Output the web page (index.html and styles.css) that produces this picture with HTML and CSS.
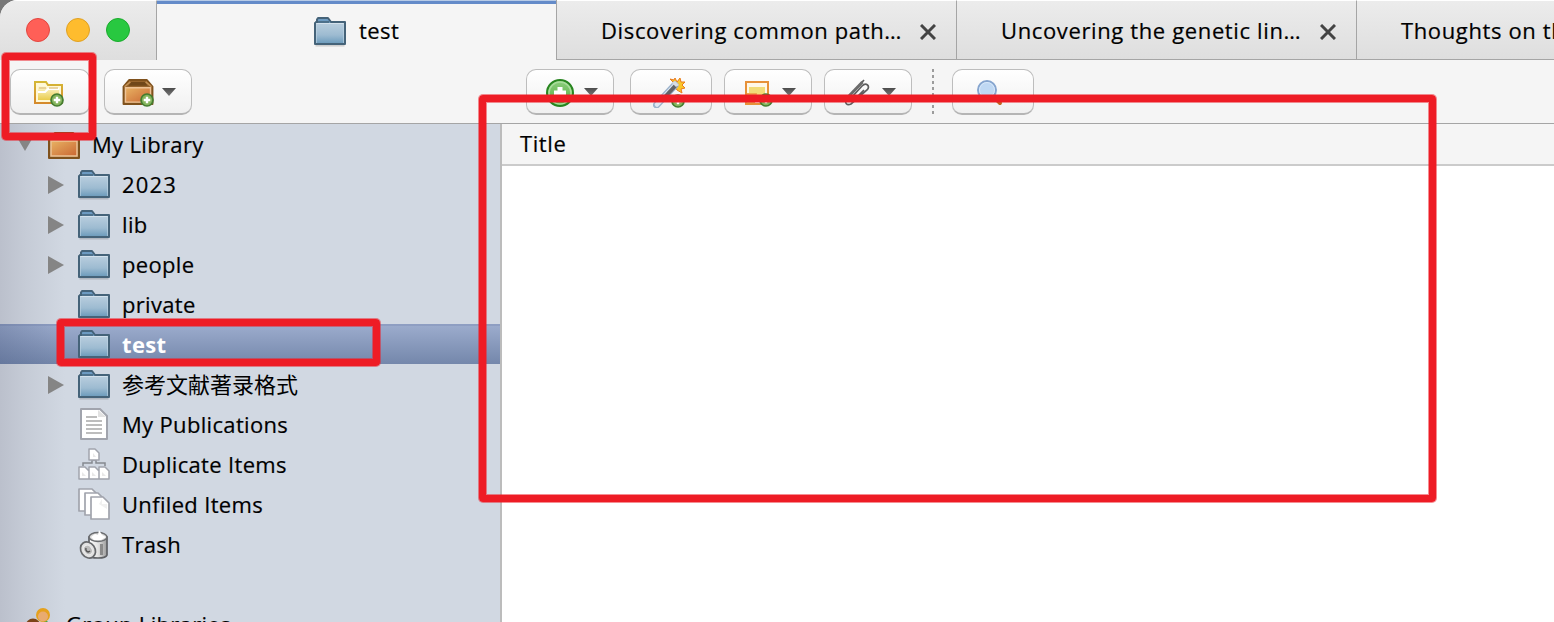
FILE: index.html
```html
<!DOCTYPE html>
<html lang="en">
<head>
<meta charset="utf-8">
<title>test</title>
<link rel="stylesheet" href="styles.css">
</head>
<body>
<svg class="defs" aria-hidden="true">
  <defs>
    <linearGradient id="blue" x1="0" y1="0" x2="0" y2="1"><stop offset="0" stop-color="#b9cede"/><stop offset=".6" stop-color="#9dbbd1"/><stop offset="1" stop-color="#6f9dbd"/></linearGradient>
    <linearGradient id="orange" x1="0" y1="0" x2="1" y2="1"><stop offset="0" stop-color="#e8b263"/><stop offset="1" stop-color="#ca6733"/></linearGradient>
    <linearGradient id="yellow" x1="0" y1="0" x2="0" y2="1"><stop offset="0" stop-color="#fffbe0"/><stop offset="1" stop-color="#e9cc4b"/></linearGradient>
    <linearGradient id="gold" x1="0" y1="0" x2="0" y2="1"><stop offset="0" stop-color="#d5b735"/><stop offset="1" stop-color="#d58a2c"/></linearGradient>
    <linearGradient id="metal"><stop offset="0" stop-color="#fff"/><stop offset=".5" stop-color="#e3e3e3"/><stop offset="1" stop-color="#9a9a9a"/></linearGradient>
    <linearGradient id="green" x1="0" y1="0" x2="0" y2="1"><stop offset="0" stop-color="#8fce7f"/><stop offset="1" stop-color="#4fae3e"/></linearGradient>
    <linearGradient id="arrow" x1="0" y1="0" x2="0" y2="1"><stop offset="0" stop-color="#4c4c4c"/><stop offset="1" stop-color="#777"/></linearGradient>
  </defs>
  <symbol id="folder" viewBox="0 0 32 30">
    <path d="M1.5 28.6h29" stroke="#000" stroke-opacity=".15" stroke-width="2"/>
    <path d="M3 6V2.500L4 1h10l3 4h14v22H1V6z" fill="#6d9bc2" stroke="#456379" stroke-width="2" stroke-linejoin="round"/>
    <path d="M2 6h28v20H2z" fill="url(#blue)"/>
    <path d="M2 6.500h28" stroke="#d3e1ec"/><path d="M2.500 6v20M29.500 6v20" stroke="#c0d6e4" stroke-opacity=".6"/>
    <path d="M1 5h14" stroke="#456379" stroke-width="1.500"/>
  </symbol>
  <symbol id="plus" viewBox="0 0 14 14">
    <circle cx="7" cy="7" r="6" fill="#85b55d" stroke="#447c30" stroke-width="1.700"/>
    <path d="M7 3.700v6.600M3.700 7h6.600" stroke="#fff" stroke-width="2.400"/>
  </symbol>
  <symbol id="caret" viewBox="0 0 14 8"><path d="M0 0h14L7 8z" fill="url(#arrow)"/></symbol>
  <symbol id="right" viewBox="0 0 16 18"><path d="M0 0l16 9L0 18z" fill="#858585"/></symbol>
  <symbol id="close" viewBox="0 0 16 16"><path d="M1 1l14 14M15 1L1 15" stroke="#444" stroke-width="3"/></symbol>
  <symbol id="box" viewBox="0 0 32 28">
    <path d="M1 8L7 1h18l6 7v18H1z" fill="#95632c" stroke="#7f511c" stroke-width="2" stroke-linejoin="round"/>
    <path d="M6 7l3-4h14l3 4z" fill="#704719"/><path d="M2 8l6-5M30 8l-6-5" stroke="#c39155" stroke-width="1.500"/>
    <path d="M3 9h26v15H3z" fill="url(#orange)" stroke="#edc397" stroke-width="1.500"/>
  </symbol>
  <symbol id="page" viewBox="0 0 28 32">
    <path d="M1 1h19l7 7v23H1z" fill="#fff" stroke="#a1a4ad" stroke-width="2" stroke-linejoin="round"/>
    <path d="M18 2v7h8" fill="#e2e2e2"/>
    <path d="M6 9h11M6 13h16M6 17h16M6 21h16M6 25h16" stroke="#bdbdbd" stroke-width="2"/>
  </symbol>
  <symbol id="duplicates" viewBox="0 0 32 32">
    <path d="M5 18v-3h9v-3h4v3h9v3" fill="none" stroke="#858990" stroke-width="1.500"/>
    <g fill="#fff" stroke="#a1a4ad" stroke-width="1.500" stroke-linejoin="round">
      <path d="M11 1h6l4 4v7H11zM1 19h6l4 4v8H1zM11 19h6l4 4v8H11zM21 19h6l4 4v8H21z"/>
    </g>
    <path d="M15 5v4h3zM4 24v4h4zM14 24v4h4zM24 24v4h4z" fill="#e8e8e8"/>
  </symbol>
  <symbol id="unfiled" viewBox="0 0 32 32">
    <g fill="#fff" stroke="#a1a4ad" stroke-width="1.700" stroke-linejoin="round">
      <path d="M1 1h13l6 6v16H1z"/><path d="M7 5h13l6 6v16H7z"/><path d="M13 9h12l6 6v16H13z"/>
    </g>
    <path d="M24 11v5h5v5l-8-5z" fill="#f0f0f0"/>
  </symbol>
  <symbol id="trash" viewBox="0 0 30 30">
    <path d="M10 7v18c1 4 17 4 18 0V7z" fill="url(#metal)" stroke="#5e6064" stroke-width="1.700"/>
    <ellipse cx="19" cy="7" rx="9" ry="4.500" fill="#d8d8d8" stroke="#6b6d70" stroke-width="1.500"/>
    <path d="M12 7l4-3 3 1 1-5 3 5 4 2-5 3h-7z" fill="#fff"/>
    <path d="M22.500 14v11" stroke="#8a8a8a" stroke-width="3"/>
    <ellipse cx="9" cy="20" rx="7" ry="8.500" transform="rotate(-35 9 20)" fill="#e2e2e2" stroke="#66686b" stroke-width="1.700"/>
    <ellipse cx="9" cy="20" rx="4" ry="5" transform="rotate(-35 9 20)" fill="#bbb" stroke="#eee"/>
    <path d="M7 18c-1 3 2 5 4 3" fill="none" stroke="#555" stroke-width="1.500"/>
  </symbol>
  <symbol id="people" viewBox="0 0 32 32">
    <path d="M12 21v-5l10-4 6 6v8z" fill="#45a54a"/>
    <circle cx="19" cy="7" r="7" fill="#e5a11d"/><ellipse cx="19" cy="8.500" rx="5" ry="5" fill="#e9ab70"/>
    <circle cx="9" cy="18" r="7.500" fill="#7c4317"/><circle cx="9" cy="20" r="4.500" fill="#d69055"/>
  </symbol>
</svg>

<div class="window">
  <header class="tabbar">
    <div class="lights"><i class="light red"></i><i class="light amber"></i><i class="light green"></i></div>
    <div class="tab active"><svg class="folder"><use href="#folder"/></svg><span>test</span></div>
    <div class="tab"><span>Discovering common path…</span><svg class="close"><use href="#close"/></svg></div>
    <div class="tab"><span>Uncovering the genetic lin…</span><svg class="close"><use href="#close"/></svg></div>
    <div class="tab"><span>Thoughts on th</span></div>
  </header>

  <div class="toolbar">
    <div class="tools-left">
      <div class="btn b80">
        <svg width="32" height="28" viewBox="0 0 32 28"><path d="M1 2h11l2 3h14v18H1z" fill="#fff8d6" stroke="url(#gold)" stroke-width="2"/><path d="M4 5h7l2 3h12v12H4z" fill="url(#yellow)"/><path d="M4 12h7l3-3h11" fill="none" stroke="#fff" stroke-width="2"/><path d="M5 8h7M15 8h9" stroke="#e4c88a" stroke-width="1.500"/><use href="#plus" x="16" y="13" width="14" height="14"/></svg>
      </div>
      <div class="btn b88">
        <svg width="32" height="28" viewBox="0 0 32 28"><use href="#box" width="32" height="27"/><use href="#plus" x="18" y="14" width="14" height="14"/></svg>
        <svg class="caret"><use href="#caret"/></svg>
      </div>
    </div>
    <div class="tools-right">
      <div class="btn b88">
        <svg width="32" height="28" viewBox="0 0 32 28"><circle cx="16" cy="14" r="13" fill="url(#green)" stroke="#27851f" stroke-width="2"/><circle cx="16" cy="14" r="11" fill="none" stroke="#a9dd9c" stroke-width="1.500"/><path d="M16 8v12M10 14h12" stroke="#fff" stroke-width="5"/></svg>
        <svg class="caret"><use href="#caret"/></svg>
      </div>
      <div class="btn b82">
        <svg width="34" height="30" viewBox="0 0 34 30"><path d="M22 0l2 4 3-4 1 4h4l-3 3 3 3-4 1 1 4-5-3-2-3-5-1 4-3-4-4 4 1z" fill="#f9c62a" stroke="#e97b1c"/><path d="M3.500 27L22 7" stroke="#9cb3cc" stroke-width="7" stroke-linecap="round"/><path d="M4 26.500L22 7" stroke="#dfe9f3" stroke-width="4.500" stroke-linecap="round"/><path d="M11 20L23 7" stroke="#626468" stroke-width="4"/><path d="M19 5l3-2 4 4-3 2z" fill="#d8dde2"/><use href="#plus" x="18" y="16" width="14" height="14"/></svg>
      </div>
      <div class="btn b88">
        <svg width="32" height="28" viewBox="0 0 32 28"><path d="M4 3h22v22H4z" fill="#fff8e8" stroke="#e79139" stroke-width="2"/><path d="M7 8h16v14H7z" fill="#f2dc78"/><path d="M5 14h10l-2 10H5z" fill="#eda650"/><use href="#plus" x="17" y="14" width="14" height="14"/></svg>
        <svg class="caret"><use href="#caret"/></svg>
      </div>
      <div class="btn b88">
        <svg width="32" height="28" viewBox="0 0 32 28"><path d="M22 1L5 20c-3 4 0 7 4 5L25 11c4-4-1-8-5-4L10 18c-2 3 1 4 3 2l9-9" fill="none" stroke="#5d5d5d" stroke-width="1.700"/><path d="M20.500 3L6 18" stroke="#6b6b6b" stroke-width="3"/></svg>
        <svg class="caret"><use href="#caret"/></svg>
      </div>
      <div class="sep"></div>
      <div class="btn b82">
        <svg width="32" height="28" viewBox="0 0 32 28"><path d="M17 17l7 7" stroke="#c1651f" stroke-width="4" stroke-linecap="round"/><circle cx="11" cy="11" r="9" fill="#bfd8f3" stroke="#86a5cf" stroke-width="2"/><circle cx="11" cy="11" r="7.500" fill="none" stroke="#d8e8fa"/></svg>
      </div>
    </div>
  </div>

  <main class="content">
    <aside class="tree">
      <div class="row root"><svg class="down" viewBox="0 0 14 12"><path d="M0 0h14L7 12z" fill="#858585"/></svg><svg class="box"><use href="#box"/></svg><span>My Library</span></div>
      <div class="row"><svg class="right"><use href="#right"/></svg><svg class="folder"><use href="#folder"/></svg><span class="digits">2023</span></div>
      <div class="row"><svg class="right"><use href="#right"/></svg><svg class="folder"><use href="#folder"/></svg><span>lib</span></div>
      <div class="row"><svg class="right"><use href="#right"/></svg><svg class="folder"><use href="#folder"/></svg><span>people</span></div>
      <div class="row leaf"><svg class="folder"><use href="#folder"/></svg><span>private</span></div>
      <div class="row leaf selected"><svg class="folder"><use href="#folder"/></svg><span>test</span></div>
      <div class="row"><svg class="right"><use href="#right"/></svg><svg class="folder"><use href="#folder"/></svg><span class="cjk">参考文献著录格式</span></div>
      <div class="row leaf"><svg class="glyph"><use href="#page"/></svg><span>My Publications</span></div>
      <div class="row leaf"><svg class="glyph"><use href="#duplicates"/></svg><span>Duplicate Items</span></div>
      <div class="row leaf"><svg class="glyph"><use href="#unfiled"/></svg><span>Unfiled Items</span></div>
      <div class="row leaf"><svg class="glyph trash"><use href="#trash"/></svg><span>Trash</span></div>
      <div class="row spacer"></div>
      <div class="row group"><svg class="glyph"><use href="#people"/></svg><span>Group Libraries</span></div>
    </aside>
    <section class="items"><div class="colhead"><span>Title</span></div></section>
  </main>

  <div class="mark mark-new"></div>
  <div class="mark mark-row"></div>
  <div class="mark mark-list"></div>
</div>
</body>
</html>
```
FILE: styles.css
```css
* { box-sizing: border-box; }
body { margin: 0; overflow: hidden; background: #777; font: 22px/40px "Open Sans", "Noto Sans CJK SC", sans-serif; letter-spacing: .33px; color: #000; -webkit-text-stroke: .2px; }
svg { display: block; flex: none; }
span { white-space: nowrap; }
.defs { position: absolute; width: 0; height: 0; }
.window { position: relative; width: 1554px; height: 622px; display: flex; flex-direction: column; overflow: hidden; background: #f5f5f5; border-top-left-radius: 18px; }

.tabbar { display: flex; height: 60px; flex: none; }
.lights { width: 157px; flex: none; display: flex; gap: 16px; padding: 18px 0 0 26px; border-right: 1px solid #a5a5a5; background: linear-gradient(#ececec, #dedede); border-top: 1px solid #fff; }
.light { width: 24px; height: 24px; border-radius: 50%; border: 1px solid; margin-top: -1px; }
.red { background: #ff5f57; border-color: #e2463f; }
.amber { background: #febc2e; border-color: #dfa023; }
.green { background: #28c840; border-color: #1aab2c; }
.tab { width: 400px; flex: none; display: flex; align-items: center; padding: 4px 0 0 44px; background: linear-gradient(#ececec, #dedede); border-right: 1px solid #a5a5a5; border-bottom: 1px solid #a5a5a5; border-top: 1px solid #fff; letter-spacing: .63px; }
.tab span { margin-top: -4px; }
.tab .close { width: 16px; height: 16px; margin-left: auto; margin-right: 20px; }
.tab.active { background: linear-gradient(#b7cbe7 1px, #648bc9 1px 4px, #f5f5f5 4px); border-top: 0; border-bottom: 0; padding: 4px 0 0 157px; gap: 13px; letter-spacing: .45px; }

.folder { width: 32px; height: 30px; }
.toolbar { height: 64px; flex: none; display: flex; border-bottom: 1px solid #a5a5a5; }
.tools-left { width: 526px; flex: none; display: flex; gap: 14px; padding: 9px 0 0 10px; }
.tools-right { display: flex; padding-top: 9px; gap: 12px; }
.tools-right .btn:first-child { margin-right: 4px; }
.btn { height: 46px; display: flex; align-items: center; justify-content: center; gap: 8px; border: 1px solid #bdbdbd; border-bottom: 2px solid #b5b5b5; border-radius: 10px; background: linear-gradient(#fff, #f0f0f0); padding: 3px 0 0 1px; }
.b80 { width: 80px; padding: 4px 0 0 0; }
.b88 { width: 88px; }
.b82 { width: 82px; padding-right: 3px; }
.caret { width: 14px; height: 8px; margin-top: -2px; }
.sep { width: 2px; height: 46px; margin: 0 6px 0 8px; background: repeating-linear-gradient(#9c9c9c 0 3px, transparent 3px 6px); }

.content { flex: 1; min-height: 0; display: flex; }
.tree { width: 502px; flex: none; border-right: 2px solid #bcbcbc; background: linear-gradient(90deg, #bbc0cc 0, #c5cbd6 25px, #d1d8e2 65px); overflow: hidden; }
.row { height: 40px; display: flex; align-items: center; padding-left: 48px; }
.row .right { width: 16px; height: 18px; margin: 2px 14px 0 0; }
.row .folder { margin-top: 2px; }
.row span { margin-left: 12px; }
.row .digits { letter-spacing: 1.200px; }
.row .cjk { letter-spacing: 0; -webkit-text-stroke: 0; }
.root { padding-left: 18px; }
.down { width: 14px; height: 12px; margin: 2px 16px 0 0; }
.box { width: 32px; height: 28px; margin-top: 4px; }
.leaf { padding-left: 78px; }
.selected { color: #fff; font-weight: 700; -webkit-text-stroke: 0; background: linear-gradient(90deg, rgba(70, 85, 125, .3), transparent 65px), linear-gradient(#8e9ec2 2px, #9babcc 2px, #7487ab); }
.glyph { width: 32px; height: 32px; }
.trash { height: 30px; margin-top: 2px; }
.group { padding-left: 24px; }
.group .glyph { margin-top: -1px; }
.row.group span { margin-left: 10px; }
.items { flex: 1; background: #fff; }
.colhead { height: 42px; background: #f5f5f5; border-bottom: 2px solid #cbcbcb; padding-left: 18px; line-height: 38px; letter-spacing: .6px; }

.mark { position: absolute; border: 7px solid #ee1c25; border-radius: 4px; box-shadow: 0 0 0 1px rgba(238, 28, 37, .5), inset 0 0 0 1px rgba(238, 28, 37, .5); }
.mark-new { left: 2px; top: 53px; width: 94px; height: 87px; }
.mark-row { left: 57px; top: 319px; width: 323px; height: 47px; }
.mark-list { left: 479px; top: 95px; width: 957px; height: 407px; }
```
